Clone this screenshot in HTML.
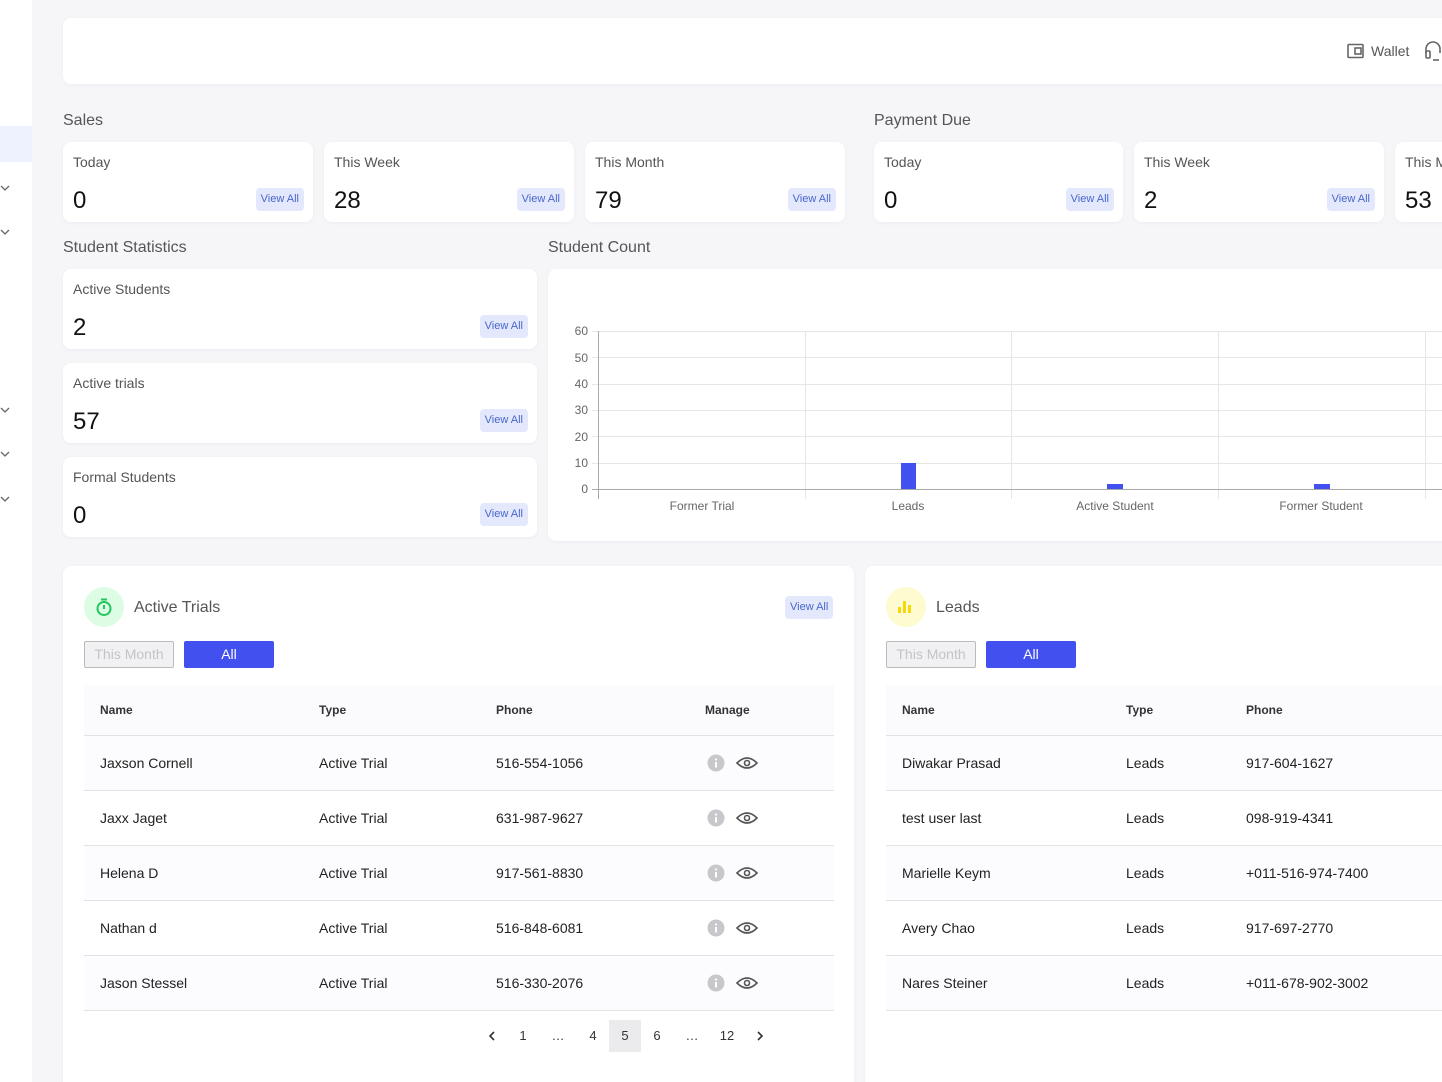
<!DOCTYPE html>
<html><head><meta charset="utf-8"><style>
*{box-sizing:border-box;margin:0;padding:0}
html{width:1442px;height:1082px;overflow:hidden}
body{width:1442px;height:1082px;overflow:hidden;background:#f6f6f9;font-family:"Liberation Sans",sans-serif;color:#222;position:relative}
.a{position:absolute}
.side{left:0;top:0;width:32px;height:1082px;background:#fff}
.card{background:#fff;border-radius:8px;box-shadow:0 1px 4px rgba(0,0,0,.04)}
.lbl{font-size:14px;color:#555}
.num{font-size:24px;color:#111}
.va{background:#e3e8fd;color:#4a67c9;font-size:11px;border-radius:4px;padding:5px 5px;line-height:13px}
.sec{font-size:16px;color:#555}
table{border-collapse:collapse;font-size:14px;color:#222}
th{font-size:12px;font-weight:bold;color:#333;text-align:left;height:50px;background:#fbfafd;border-bottom:1px solid #e2e2e6}
td{height:55px;border-bottom:1px solid #e2e2e6;vertical-align:middle}
td svg{display:block}
tr.t td{background:#fcfbfd}
.btn1{border:1px solid #bbb;background:#f1f1f3;color:#c4c4c8;font-size:14px;text-align:center;border-radius:2px;line-height:25px}
.btn2{background:#4350f0;color:#fff;font-size:14px;text-align:center;border-radius:2px;line-height:27px}
.yl{font-size:12px;color:#666;text-align:right;width:22px;left:566px}
.xl{font-size:12px;color:#666;text-align:center;width:206px;top:499px}
.pg{font-size:13px;color:#333;top:1020px;height:32px;line-height:32px;text-align:center}
</style></head><body>
<div class="a side"></div>
<div class="a" style="left:0;top:126px;width:32px;height:36px;background:#eef2fe"></div>
<svg class="a" style="left:0;top:0" width="32" height="1082">
<g fill="none" stroke="#666" stroke-width="1.3">
<path d="M1 186l4 4 4-4"/><path d="M1 230l4 4 4-4"/><path d="M1 408l4 4 4-4"/><path d="M1 452l4 4 4-4"/><path d="M1 497l4 4 4-4"/></g></svg>

<div class="a card" style="left:63px;top:18px;width:1400px;height:66px"></div>
<svg class="a" style="left:1347px;top:43px" width="18" height="16"><rect x="1" y="1.5" width="15" height="13" rx="1" fill="none" stroke="#666" stroke-width="1.6"/><rect x="8" y="5" width="6" height="6" fill="none" stroke="#666" stroke-width="1.6"/></svg>
<div class="a" style="left:1371px;top:43px;font-size:14px;color:#555">Wallet</div>
<svg class="a" style="left:1424px;top:40px" width="18" height="22"><path d="M2 13v-4a7 7 0 0114 0v4" fill="none" stroke="#666" stroke-width="1.6"/><rect x="2" y="11" width="4" height="7" rx="1" fill="none" stroke="#666" stroke-width="1.6"/><path d="M9 20h6" stroke="#666" stroke-width="1.6"/></svg>

<div class="a sec" style="left:63px;top:112px">Sales</div>
<div class="a sec" style="left:874px;top:112px">Payment Due</div>

<div class="a card" style="left:63px;top:142px;width:250px;height:80px"><div class="a lbl" style="left:10px;top:12px">Today</div><div class="a num" style="left:10px;top:45px">0</div><div class="a va" style="right:9px;top:46px">View All</div></div>
<div class="a card" style="left:324px;top:142px;width:250px;height:80px"><div class="a lbl" style="left:10px;top:12px">This Week</div><div class="a num" style="left:10px;top:45px">28</div><div class="a va" style="right:9px;top:46px">View All</div></div>
<div class="a card" style="left:585px;top:142px;width:260px;height:80px"><div class="a lbl" style="left:10px;top:12px">This Month</div><div class="a num" style="left:10px;top:45px">79</div><div class="a va" style="right:9px;top:46px">View All</div></div>
<div class="a card" style="left:874px;top:142px;width:249px;height:80px"><div class="a lbl" style="left:10px;top:12px">Today</div><div class="a num" style="left:10px;top:45px">0</div><div class="a va" style="right:9px;top:46px">View All</div></div>
<div class="a card" style="left:1134px;top:142px;width:250px;height:80px"><div class="a lbl" style="left:10px;top:12px">This Week</div><div class="a num" style="left:10px;top:45px">2</div><div class="a va" style="right:9px;top:46px">View All</div></div>
<div class="a card" style="left:1395px;top:142px;width:250px;height:80px"><div class="a lbl" style="left:10px;top:12px">This Month</div><div class="a num" style="left:10px;top:45px">53</div></div>

<div class="a sec" style="left:63px;top:239px">Student Statistics</div>
<div class="a sec" style="left:548px;top:239px">Student Count</div>

<div class="a card" style="left:63px;top:269px;width:474px;height:80px"><div class="a lbl" style="left:10px;top:12px">Active Students</div><div class="a num" style="left:10px;top:45px">2</div><div class="a va" style="right:9px;top:46px">View All</div></div>
<div class="a card" style="left:63px;top:363px;width:474px;height:80px"><div class="a lbl" style="left:10px;top:12px">Active trials</div><div class="a num" style="left:10px;top:45px">57</div><div class="a va" style="right:9px;top:46px">View All</div></div>
<div class="a card" style="left:63px;top:457px;width:474px;height:80px"><div class="a lbl" style="left:10px;top:12px">Formal Students</div><div class="a num" style="left:10px;top:45px">0</div><div class="a va" style="right:9px;top:46px">View All</div></div>

<div class="a card" style="left:548px;top:269px;width:920px;height:272px"></div>
<svg class="a" style="left:0;top:0" width="1442" height="560">
<g stroke="#e6e6e6" stroke-width="1">
<path d="M592 331.5H1442M592 357.5H1442M592 384.5H1442M592 410.5H1442M592 436.5H1442M592 463.5H1442"/>
<path d="M805.5 331V499M1011.5 331V499M1218.5 331V499M1425.5 331V499"/>
</g>
<path d="M598.5 331V499M592 489.5H1442" stroke="#aaa"/>
<rect x="901" y="463" width="15" height="26" fill="#4350f0"/>
<rect x="1107" y="484" width="16" height="5" fill="#4350f0"/>
<rect x="1314" y="484" width="16" height="5" fill="#4350f0"/>
</svg>
<div class="a yl" style="top:324px">60</div><div class="a yl" style="top:351px">50</div><div class="a yl" style="top:377px">40</div><div class="a yl" style="top:403px">30</div><div class="a yl" style="top:430px">20</div><div class="a yl" style="top:456px">10</div><div class="a yl" style="top:482px">0</div>
<div class="a xl" style="left:599px">Former Trial</div><div class="a xl" style="left:805px">Leads</div><div class="a xl" style="left:1012px">Active Student</div><div class="a xl" style="left:1218px">Former Student</div>

<div class="a card" style="left:63px;top:566px;width:791px;height:530px"></div>
<div class="a" style="left:84px;top:587px;width:40px;height:40px;border-radius:50%;background:#dcfce3"></div>
<svg class="a" style="left:94px;top:597px" width="20" height="20"><circle cx="10" cy="11.5" r="6.5" fill="none" stroke="#22c55e" stroke-width="2"/><path d="M7 2.5h6M10 8v4" stroke="#22c55e" stroke-width="2"/></svg>
<div class="a" style="left:134px;top:599px;font-size:16px;color:#555">Active Trials</div>
<div class="a va" style="left:785px;top:596px">View All</div>
<div class="a btn1" style="left:84px;top:641px;width:90px;height:27px">This Month</div>
<div class="a btn2" style="left:184px;top:641px;width:90px;height:27px">All</div>
<table class="a" style="left:84px;top:685px;width:750px">
<tr><th style="padding-left:16px;width:235px">Name</th><th style="width:177px">Type</th><th style="width:209px">Phone</th><th>Manage</th></tr>
<tr class="t"><td style="padding-left:16px">Jaxson Cornell</td><td>Active Trial</td><td>516-554-1056</td><td><svg width="60" height="20"><circle cx="11" cy="10" r="8.5" fill="#c8c8cc"/><rect x="10" y="9" width="2" height="5.5" fill="#fff"/><circle cx="11" cy="6.5" r="1.1" fill="#fff"/><path d="M32 10q10-10 20 0q-10 10-20 0z" fill="none" stroke="#555" stroke-width="1.6"/><circle cx="42" cy="10" r="2.5" fill="none" stroke="#555" stroke-width="1.6"/></svg></td></tr>
<tr><td style="padding-left:16px">Jaxx Jaget</td><td>Active Trial</td><td>631-987-9627</td><td><svg width="60" height="20"><circle cx="11" cy="10" r="8.5" fill="#c8c8cc"/><rect x="10" y="9" width="2" height="5.5" fill="#fff"/><circle cx="11" cy="6.5" r="1.1" fill="#fff"/><path d="M32 10q10-10 20 0q-10 10-20 0z" fill="none" stroke="#555" stroke-width="1.6"/><circle cx="42" cy="10" r="2.5" fill="none" stroke="#555" stroke-width="1.6"/></svg></td></tr>
<tr class="t"><td style="padding-left:16px">Helena D</td><td>Active Trial</td><td>917-561-8830</td><td><svg width="60" height="20"><circle cx="11" cy="10" r="8.5" fill="#c8c8cc"/><rect x="10" y="9" width="2" height="5.5" fill="#fff"/><circle cx="11" cy="6.5" r="1.1" fill="#fff"/><path d="M32 10q10-10 20 0q-10 10-20 0z" fill="none" stroke="#555" stroke-width="1.6"/><circle cx="42" cy="10" r="2.5" fill="none" stroke="#555" stroke-width="1.6"/></svg></td></tr>
<tr><td style="padding-left:16px">Nathan d</td><td>Active Trial</td><td>516-848-6081</td><td><svg width="60" height="20"><circle cx="11" cy="10" r="8.5" fill="#c8c8cc"/><rect x="10" y="9" width="2" height="5.5" fill="#fff"/><circle cx="11" cy="6.5" r="1.1" fill="#fff"/><path d="M32 10q10-10 20 0q-10 10-20 0z" fill="none" stroke="#555" stroke-width="1.6"/><circle cx="42" cy="10" r="2.5" fill="none" stroke="#555" stroke-width="1.6"/></svg></td></tr>
<tr class="t"><td style="padding-left:16px">Jason Stessel</td><td>Active Trial</td><td>516-330-2076</td><td><svg width="60" height="20"><circle cx="11" cy="10" r="8.5" fill="#c8c8cc"/><rect x="10" y="9" width="2" height="5.5" fill="#fff"/><circle cx="11" cy="6.5" r="1.1" fill="#fff"/><path d="M32 10q10-10 20 0q-10 10-20 0z" fill="none" stroke="#555" stroke-width="1.6"/><circle cx="42" cy="10" r="2.5" fill="none" stroke="#555" stroke-width="1.6"/></svg></td></tr>
</table>
<svg class="a" style="left:486px;top:1030px" width="12" height="12"><path d="M8 2l-4 4 4 4" fill="none" stroke="#333" stroke-width="1.6"/></svg>
<div class="a pg" style="left:511px;width:24px">1</div>
<div class="a pg" style="left:546px;width:24px">…</div>
<div class="a pg" style="left:581px;width:24px">4</div>
<div class="a pg" style="left:609px;width:32px;background:#ebebee">5</div>
<div class="a pg" style="left:645px;width:24px">6</div>
<div class="a pg" style="left:680px;width:24px">…</div>
<div class="a pg" style="left:715px;width:24px">12</div>
<svg class="a" style="left:754px;top:1030px" width="12" height="12"><path d="M4 2l4 4-4 4" fill="none" stroke="#333" stroke-width="1.6"/></svg>

<div class="a card" style="left:865px;top:566px;width:600px;height:530px"></div>
<div class="a" style="left:886px;top:587px;width:40px;height:40px;border-radius:50%;background:#fefbd0"></div>
<svg class="a" style="left:897px;top:599px" width="18" height="16"><rect x="1" y="8" width="3" height="6" fill="#f5d90a"/><rect x="6" y="2" width="3" height="12" fill="#f5d90a"/><rect x="11" y="6" width="3" height="8" fill="#f5d90a"/></svg>
<div class="a" style="left:936px;top:599px;font-size:16px;color:#555">Leads</div>
<div class="a btn1" style="left:886px;top:641px;width:90px;height:27px">This Month</div>
<div class="a btn2" style="left:986px;top:641px;width:90px;height:27px">All</div>
<table class="a" style="left:886px;top:685px;width:600px">
<tr><th style="padding-left:16px;width:240px">Name</th><th style="width:120px">Type</th><th>Phone</th></tr>
<tr class="t"><td style="padding-left:16px">Diwakar Prasad</td><td>Leads</td><td>917-604-1627</td></tr>
<tr><td style="padding-left:16px">test user last</td><td>Leads</td><td>098-919-4341</td></tr>
<tr class="t"><td style="padding-left:16px">Marielle Keym</td><td>Leads</td><td>+011-516-974-7400</td></tr>
<tr><td style="padding-left:16px">Avery Chao</td><td>Leads</td><td>917-697-2770</td></tr>
<tr class="t"><td style="padding-left:16px">Nares Steiner</td><td>Leads</td><td>+011-678-902-3002</td></tr>
</table>
</body></html>
